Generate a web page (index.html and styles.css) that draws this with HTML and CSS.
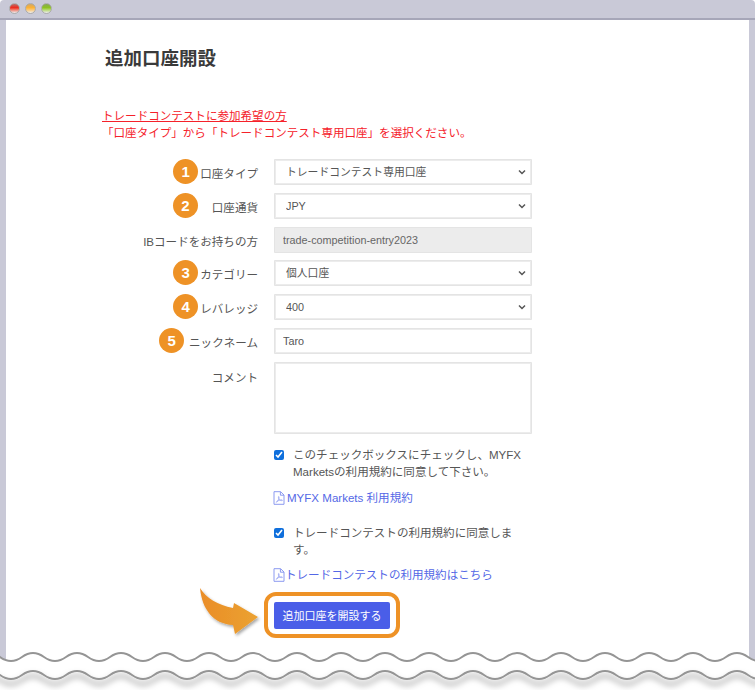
FILE: index.html
```html
<!DOCTYPE html>
<html lang="ja">
<head>
<meta charset="utf-8">
<title>追加口座開設</title>
<link rel="stylesheet" href="styles.css">
</head>
<body>
<div class="window">
  <header class="titlebar">
    <span class="light light-red"></span>
    <span class="light light-yellow"></span>
    <span class="light light-green"></span>
  </header>
  <main class="content">
    <h1 class="title">追加口座開設</h1>
    <div class="notice">
      <a class="notice-link" href="#">トレードコンテストに参加希望の方</a>
      <p class="notice-text">「口座タイプ」から「トレードコンテスト専用口座」を選択ください。</p>
    </div>
    <form class="form">
      <label class="label"><span class="badge">1</span>口座タイプ</label>
      <select class="field field-select"><option>トレードコンテスト専用口座</option></select>

      <label class="label label-wide"><span class="badge">2</span>口座通貨</label>
      <select class="field field-select"><option>JPY</option></select>

      <label class="label">IBコードをお持ちの方</label>
      <input class="field field-text field-disabled" value="trade-competition-entry2023" disabled>

      <label class="label"><span class="badge">3</span>カテゴリー</label>
      <select class="field field-select"><option>個人口座</option></select>

      <label class="label"><span class="badge">4</span>レバレッジ</label>
      <select class="field field-select"><option>400</option></select>

      <label class="label label-five"><span class="badge">5</span>ニックネーム</label>
      <input class="field field-text" value="Taro">

      <label class="label label-top">コメント</label>
      <textarea class="field field-area"></textarea>

      <div class="agreements">
        <label class="check"><input class="check-box" type="checkbox" checked><span>このチェックボックスにチェックし、MYFX Marketsの利用規約に同意して下さい。</span></label>
        <a class="doc-link doc-link-first" href="#">
          <svg class="pdf" viewBox="0 0 12 14" aria-hidden="true"><path d="M1 .7h6.6L11 4v9.300H1z M7.400.8v3.400H11" fill="none" stroke="currentColor"/><path d="M3.200 11.300c1.500-.8 3-3.600 2.900-5.300-.1-.9-.9-.6-.7.400.3 1.700 1.900 3.300 3.400 3.300.9 0 .8-.9-.1-.9-1.700 0-5.300 1.500-5.500 2.500z" fill="none" stroke="currentColor" stroke-width=".7"/></svg>
          MYFX Markets 利用規約</a>
        <label class="check check-second"><input class="check-box" type="checkbox" checked><span>トレードコンテストの利用規約に同意します。</span></label>
        <a class="doc-link doc-link-tight" href="#">
          <svg class="pdf" viewBox="0 0 12 14" aria-hidden="true"><path d="M1 .7h6.6L11 4v9.300H1z M7.400.8v3.400H11" fill="none" stroke="currentColor"/><path d="M3.200 11.300c1.500-.8 3-3.600 2.900-5.300-.1-.9-.9-.6-.7.400.3 1.700 1.900 3.300 3.400 3.300.9 0 .8-.9-.1-.9-1.700 0-5.300 1.500-5.500 2.500z" fill="none" stroke="currentColor" stroke-width=".7"/></svg>トレードコンテストの利用規約はこちら</a>
        <div class="submit-ring"><button class="submit" type="button">追加口座を開設する</button></div>
      </div>
    </form>
  </main>
  <svg class="arrow" viewBox="0 0 70 60" aria-hidden="true">
    <defs>
      <linearGradient id="arrowFill" x1="0" x2="1" y1="0" y2="0">
        <stop offset="0" stop-color="#ea8d28"/>
        <stop offset="1" stop-color="#eba231"/>
      </linearGradient>
      <filter id="arrowShadow" x="-20%" y="-20%" width="150%" height="150%">
        <feDropShadow dx="1.500" dy="2" stdDeviation="1.500" flood-color="#000" flood-opacity=".35"/>
      </filter>
    </defs>
    <path d="M0 0C6 10 18 17 33 20L34 15L58 29L35 46L33 37C14 36 2 22 0 0Z" fill="url(#arrowFill)" filter="url(#arrowShadow)"/>
  </svg>
  <svg class="tear" viewBox="0 0 755 48" aria-hidden="true">
    <defs>
      <filter id="tearShadow" x="-2%" y="-50%" width="104%" height="300%">
        <feDropShadow dx="0" dy="5" stdDeviation="3" flood-color="#000" flood-opacity=".55"/>
      </filter>
    </defs>
    <path d="M-22 15q11-8 22 0t22 0 22 0 22 0 22 0 22 0 22 0 22 0 22 0 22 0 22 0 22 0 22 0 22 0 22 0 22 0 22 0 22 0 22 0 22 0 22 0 22 0 22 0 22 0 22 0 22 0 22 0 22 0 22 0 22 0 22 0 22 0 22 0 22 0 22 0 22 0 22 0V48H-22z" fill="#fff"/>
    <path d="M-22 33q11-8 22 0t22 0 22 0 22 0 22 0 22 0 22 0 22 0 22 0 22 0 22 0 22 0 22 0 22 0 22 0 22 0 22 0 22 0 22 0 22 0 22 0 22 0 22 0 22 0 22 0 22 0 22 0 22 0 22 0 22 0 22 0 22 0 22 0 22 0 22 0 22 0 22 0" fill="none" stroke="#959595" stroke-width="2" filter="url(#tearShadow)"/>
    <path d="M-22 15q11-8 22 0t22 0 22 0 22 0 22 0 22 0 22 0 22 0 22 0 22 0 22 0 22 0 22 0 22 0 22 0 22 0 22 0 22 0 22 0 22 0 22 0 22 0 22 0 22 0 22 0 22 0 22 0 22 0 22 0 22 0 22 0 22 0 22 0 22 0 22 0 22 0 22 0" fill="none" stroke="#959595" stroke-width="2"/>
  </svg>
</div>
</body>
</html>
```
FILE: styles.css
```css
* { box-sizing: border-box; }
html, body { margin: 0; padding: 0; background: #fff; }
body {
  font-family: "Liberation Sans", "Noto Sans CJK JP", sans-serif;
  font-size: 11.550px;
  color: #555;
}
.window {
  position: relative;
  width: 755px;
  height: 690px;
  overflow: hidden;
  background: #c9c9d7;
  border-radius: 4px 4px 0 0;
  padding: 0 6px;
}
.titlebar {
  display: flex;
  align-items: center;
  gap: 4.500px;
  height: 20px;
  margin: 0 -6px;
  padding: 0 0 1px 8.500px;
  border-bottom: 2px solid #a6a6b8;
}
.light {
  width: 11.500px;
  height: 11.500px;
  border-radius: 50%;
  border: 1px solid #ababab;
}
.light-red { background: linear-gradient(#b9706e 0, #ee2a1e 40%, #f08070 65%, #eee 100%); }
.light-yellow { background: linear-gradient(#d0a868 0, #fdb233 40%, #fbc878 65%, #eee 100%); }
.light-green { background: linear-gradient(#88a85a 0, #8cc31f 40%, #b5d870 65%, #eee 100%); }
.content {
  height: 670px;
  background: #fff;
  padding: 28px 0 0 96px;
}
.title {
  margin: 0 0 0 3px;
  font-size: 18.500px;
  line-height: 22px;
  font-weight: 700;
  color: #3a3a3a;
}
.notice { margin-top: 38px; color: #f5212a; line-height: 17px; }
.notice-link { color: #f5212a; text-decoration: underline; display: block; }
.notice-text { margin: 0; }
.form {
  display: grid;
  grid-template-columns: 156px 258px;
  column-gap: 16px;
  row-gap: 7.800px;
  margin-top: 17px;
}
.label {
  display: flex;
  align-items: center;
  justify-content: flex-end;
  gap: 2px;
  padding-top: 2px;
  color: #555;
  white-space: nowrap;
}
.label-wide { gap: 14px; }
.label-five { gap: 5px; }
.label-top { align-items: flex-start; padding-top: 7px; }
.badge {
  flex: none;
  width: 25px;
  height: 25px;
  margin-top: -3px;
  border-radius: 50%;
  background: #ee9226;
  color: #fff;
  font-size: 15px;
  font-weight: 700;
  line-height: 25px;
  text-align: center;
}
.field {
  width: 258px;
  height: 26px;
  border: 2px solid #ececec;
  border-radius: 1px;
  background-color: #fff;
  color: #555;
  font: inherit;
  font-size: 10.800px;
  padding: 0 7px;
  outline: 1px solid #e4e4e4;
  outline-offset: -1px;
}
.field-select {
  appearance: none;
  padding-left: 10px;
  background-image: url("data:image/svg+xml,%3Csvg xmlns='http://www.w3.org/2000/svg' width='8' height='6'%3E%3Cpath d='M1 1.500l3 3 3-3' fill='none' stroke='%23555' stroke-width='1.500'/%3E%3C/svg%3E");
  background-repeat: no-repeat;
  background-position: right 4px center;
}
.field-disabled { background-color: #ececec; color: #666; }
.field-area { height: 72px; resize: none; display: block; }
.agreements { grid-column: 2; margin-top: 5px; }
.check {
  display: grid;
  grid-template-columns: 9px 1fr;
  column-gap: 10px;
  line-height: 17px;
  padding-right: 10px;
}
.check-box {
  width: 10px;
  height: 10px;
  margin: 3.500px 0 0;
  accent-color: #0f6fdc;
}
.check-second { margin-top: 18px; }
.doc-link {
  display: flex;
  align-items: center;
  gap: 2px;
  color: #5468e6;
  text-decoration: none;
  margin-top: 8px;
  line-height: 17px;
  white-space: nowrap;
  margin-left: -1px;
}
.doc-link-first { margin-top: 9px; }
.doc-link-tight { gap: 0; }
.pdf { width: 12px; height: 14px; flex: none; color: #8c9af0; }
.submit-ring {
  width: 136px;
  height: 46px;
  margin: 8px 0 0 -10px;
  padding: 6px;
  border: 4px solid #ee9226;
  border-radius: 12px;
  background: #fff;
}
.submit {
  display: block;
  width: 116px;
  height: 27px;
  border: 0;
  border-radius: 2px;
  background: #4a5ee8;
  color: #fff;
  font: inherit;
  font-size: 11px;
  padding: 0;
}
.arrow {
  position: absolute;
  left: 200px;
  top: 588px;
  width: 70px;
  height: 60px;
}
.tear {
  position: absolute;
  left: 0;
  top: 642px;
  width: 755px;
  height: 48px;
}
```
